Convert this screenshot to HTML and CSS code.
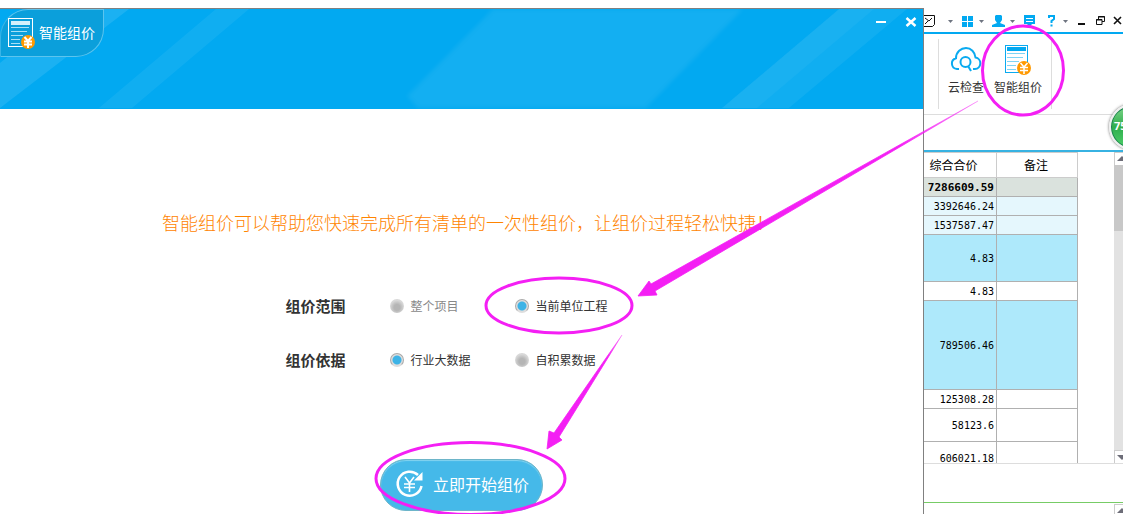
FILE: index.html
```html
<!DOCTYPE html>
<html lang="zh-CN">
<head>
    <meta charset="utf-8">
    <title>智能组价</title>
    <link rel="stylesheet" href="styles.css">
</head>
<body>
    <div class="screen">
        <!-- dialog -->
        <section class="dialog">
            <header class="dialog-header">
                <svg class="stripes" width="923" height="100" viewBox="0 0 923 100" aria-hidden="true">
                    <path d="M0 54 L66 0 H129 L0 99z" fill="#fff" fill-opacity=".1"/>
                    <path d="M216 0 H249 L132 99 H99z" fill="#fff" fill-opacity=".06"/>
                    <path class="soft" d="M493 0 H743 L646 99 H418 L407 87z" fill="#fff" fill-opacity=".07"/>
                    <path d="M839 0 H907 L789 99 H722z" fill="#fff" fill-opacity=".06"/>
                    <path d="M839 0 H874 L757 99 H722z" fill="#fff" fill-opacity=".04"/>
                </svg>
                <div class="dialog-tab">
                    <svg width="28" height="32" viewBox="0 0 28 32" aria-hidden="true">
                        <rect x=".5" y=".5" width="24" height="28" fill="#0b9fdb" stroke="#fff"/>
                        <rect x="3" y="3" width="19" height="4" fill="#d5f1fb"/>
                        <path d="M3 9.500h18M3 13.500h16M3 17.500h12M3 21.500h9M3 25.500h9" stroke="#a8e0f5" fill="none"/>
                        <circle cx="20" cy="24" r="7" fill="#f90"/>
                        <path d="M16.500 19l3.500 4 3.500-4M16 23.500h8M16 26.500h8M20 23v7" stroke="#fff" stroke-width="2" fill="none"/>
                    </svg>
                    <span>智能组价</span>
                </div>
                <div class="dialog-controls">
                    <button type="button" aria-label="最小化">
                        <svg width="12" height="12" viewBox="0 0 12 12"><path d="M1 6h10" stroke="#fff" stroke-width="2"/></svg>
                    </button>
                    <button type="button" aria-label="关闭">
                        <svg width="12" height="12" viewBox="0 0 12 12"><path d="M1.500 2l9 8M10.500 2l-9 8" stroke="#fff" stroke-width="2.500"/></svg>
                    </button>
                </div>
            </header>

            <div class="dialog-body">
                <p class="intro">智能组价可以帮助您快速完成所有清单的一次性组价，让组价过程轻松快捷！</p>

                <form class="options">
                    <div class="option-row" role="radiogroup" aria-labelledby="scope">
                        <strong id="scope">组价范围</strong>
                        <label class="muted"><input type="radio" name="scope">整个项目</label>
                        <label><input type="radio" name="scope" checked>当前单位工程</label>
                    </div>
                    <div class="option-row" role="radiogroup" aria-labelledby="basis">
                        <strong id="basis">组价依据</strong>
                        <label><input type="radio" name="basis" checked>行业大数据</label>
                        <label><input type="radio" name="basis">自积累数据</label>
                    </div>
                    <button type="button" class="start-button">
                        <svg width="30" height="30" viewBox="0 0 30 30" aria-hidden="true">
                            <path d="M23 6A12 12 0 1 0 26.500 17" fill="none" stroke="#fff" stroke-width="2.500"/>
                            <path d="M27.500 3v8.500h-8.500z" fill="#fff"/>
                            <path d="M10 8l4.500 6 4.500-6M9 15h11M9 18.500h11M14.500 14v9" fill="none" stroke="#fff" stroke-width="1.600"/>
                        </svg>
                        <span>立即开始组价</span>
                    </button>
                </form>
            </div>
        </section>

        <!-- main program behind the dialog -->
        <section class="app">
            <div class="title-bar">
                <button type="button" class="w35" aria-label="反馈">
                    <svg width="35" height="32" viewBox="0 0 35 32">
                        <path d="M0 15.500h10.500v9l-2 2H0M1 18l4 3 3-3M1 24l3-3" fill="none" stroke="#111"/>
                        <path d="M24 20h5l-2.500 3z" fill="#6e7480"/>
                    </svg>
                </button>
                <button type="button" class="w31" aria-label="窗口布局">
                    <svg width="31" height="32" viewBox="0 0 31 32">
                        <path d="M3 16h5v5H3zM9 16h5v5H9zM3 22h5v5H3zM9 22h5v5H9z" fill="#02a9f1"/>
                        <path d="M20 20h5l-2.500 3z" fill="#6e7480"/>
                    </svg>
                </button>
                <button type="button" class="w31" aria-label="用户">
                    <svg width="31" height="32" viewBox="0 0 31 32">
                        <path d="M6 15h5l1 1v4l-2 3 5 2v2H2v-2l5-2-2-3v-4z" fill="#02a9f1"/>
                        <path d="M20 20h5l-2.500 3z" fill="#6e7480"/>
                    </svg>
                </button>
                <button type="button" class="w22" aria-label="消息">
                    <svg width="22" height="32" viewBox="0 0 22 32">
                        <path d="M3 15h11v9h-3l-2.500 3L6 24H3z" fill="#02a9f1"/>
                        <path d="M5 18.500h7M5 21.500h7" stroke="#fff"/>
                    </svg>
                </button>
                <button type="button" class="w31" aria-label="帮助">
                    <svg width="31" height="32" viewBox="0 0 31 32">
                        <path d="M6 18v-2h5v3l-2.500 2v2M8.500 24.500v2" fill="none" stroke="#02a9f1" stroke-width="2"/>
                        <path d="M20 20h5l-2.500 3z" fill="#6e7480"/>
                    </svg>
                </button>
                <button type="button" class="w17" aria-label="最小化">
                    <svg width="17" height="32" viewBox="0 0 17 32"><path d="M4 24h7" stroke="#111" stroke-width="2"/></svg>
                </button>
                <button type="button" class="w18" aria-label="还原">
                    <svg width="18" height="32" viewBox="0 0 18 32">
                        <path d="M7.500 19v-2.500h6v5H11M7 17h7" fill="none" stroke="#111"/>
                        <path d="M5.500 19.500H11v5H5.500zM5 20h6" fill="#fff" stroke="#111"/>
                    </svg>
                </button>
                <button type="button" class="w14" aria-label="关闭">
                    <svg width="14" height="32" viewBox="0 0 14 32"><path d="M5 17l7 7M12 17l-7 7" stroke="#111" stroke-width="1.600"/></svg>
                </button>
            </div>

            <div class="ribbon">
                <div class="ribbon-group">
                    <button type="button" class="cloud-button">
                        <svg width="32" height="32" viewBox="0 0 32 32" aria-hidden="true">
                            <path d="M9 26H7a5.500 5.500 0 0 1-1-10.800C6 9 11 5 16 5s9 4 9.500 9.500A5.800 5.800 0 0 1 25 26h-2" fill="none" stroke="#0aaaf0" stroke-width="2"/>
                            <circle cx="15.500" cy="19" r="5" fill="none" stroke="#0aaaf0" stroke-width="2"/>
                            <path d="M18 23l3 5" stroke="#0aaaf0" stroke-width="2"/>
                        </svg>
                        <span>云检查</span>
                    </button>
                    <button type="button" class="price-button">
                        <svg width="28" height="32" viewBox="0 0 28 32" aria-hidden="true">
                            <rect x="1.500" y="2.500" width="22" height="27" fill="#fff" stroke="#0aaaf0"/>
                            <rect x="3" y="4" width="19" height="4" fill="#02a9f1"/>
                            <path d="M3 10.500h18M3 14.500h16M3 18.500h12M3 22.500h9M3 26.500h9" stroke="#7fd4f5" fill="none"/>
                            <circle cx="20" cy="25" r="7" fill="#f90"/>
                            <path d="M16.500 20l3.500 4 3.500-4M16 24.500h8M16 27.500h8M20 24v7" stroke="#fff" stroke-width="1.500" fill="none"/>
                        </svg>
                        <span>智能组价</span>
                    </button>
                </div>
            </div>
            <div class="tool-row"></div>

            <div class="grid-area">
                <table>
                    <thead>
                        <tr class="h26"><th>综合合价</th><th>备注</th></tr>
                    </thead>
                    <tbody>
                        <tr class="h19 total"><td><b>7286609.59</b></td><td></td></tr>
                        <tr class="h19 part"><td>3392646.24</td><td></td></tr>
                        <tr class="h19 part"><td>1537587.47</td><td></td></tr>
                        <tr class="h47 item"><td>4.83</td><td></td></tr>
                        <tr class="h19"><td>4.83</td><td></td></tr>
                        <tr class="h89 item"><td>789506.46</td><td></td></tr>
                        <tr class="h19"><td>125308.28</td><td></td></tr>
                        <tr class="h33"><td>58123.6</td><td></td></tr>
                        <tr class="h33"><td>606021.18</td><td></td></tr>
                    </tbody>
                </table>
                <div class="scrollbar">
                    <span class="arrow"><svg width="9" height="12" viewBox="0 0 9 12"><path d="M2 8h10L7 3z" fill="#6d6d78"/></svg></span>
                    <span class="thumb"></span>
                    <span class="arrow last"><svg width="9" height="12" viewBox="0 0 9 12"><path d="M2 4h10L7 9z" fill="#6d6d78"/></svg></span>
                </div>
            </div>
            <div class="status-row"></div>
            <div class="lower-pane">
                <span class="arrow"><svg width="9" height="12" viewBox="0 0 9 12"><path d="M2 8h10L7 3z" fill="#6d6d78"/></svg></span>
            </div>
            <div class="speed-ball">75</div>
        </section>

        <!-- pen marks over both windows -->
        <svg class="marks" width="1123" height="514" viewBox="0 0 1123 514" aria-hidden="true">
            <defs>
                <linearGradient id="fade-long" gradientUnits="userSpaceOnUse" x1="978" y1="101" x2="900" y2="146">
                    <stop offset="0" stop-color="#f41ff4" stop-opacity=".3"/>
                    <stop offset="1" stop-color="#f41ff4"/>
                </linearGradient>
                <linearGradient id="fade-short" gradientUnits="userSpaceOnUse" x1="622" y1="335" x2="608" y2="357">
                    <stop offset="0" stop-color="#f41ff4" stop-opacity=".3"/>
                    <stop offset="1" stop-color="#f41ff4"/>
                </linearGradient>
            </defs>
            <g fill="none" stroke="#f41ff4" stroke-width="3">
                <ellipse cx="1023" cy="70.500" rx="40.500" ry="44.500"/>
                <ellipse cx="559" cy="305.500" rx="73" ry="27.500"/>
                <ellipse cx="470.500" cy="478.500" rx="94.500" ry="36"/>
            </g>
            <path d="M638 296l11-15 2 3L978 101 655 291l2 4z" fill="url(#fade-long)" stroke="url(#fade-long)" stroke-width=".8"/>
            <path d="M547 449l2-18 5 2L622 335 559 437l3 3z" fill="url(#fade-short)" stroke="url(#fade-short)" stroke-width=".8"/>
        </svg>
    </div>
</body>
</html>
```
FILE: styles.css
```css
* {
    box-sizing: border-box;
}

body {
    margin: 0;
    background: #fff;
    color: #333;
    font-family: "Noto Sans CJK SC", sans-serif;
    font-size: 12px;
    line-height: 16px;
}

button {
    padding: 0;
    border: none;
    background: none;
    color: inherit;
    font: inherit;
    cursor: pointer;
}

svg {
    display: block;
    flex: none;
}

.screen {
    position: relative;
    display: grid;
    grid-template-columns: minmax(0, 1fr) 199px;
    height: 100vh;
    overflow: hidden;
}

/* dialog */
.dialog {
    margin-top: 8px;
    border-top: 1px solid #808080;
    border-right: 1px solid #808080;
}

.dialog-header {
    position: relative;
    display: flex;
    justify-content: space-between;
    align-items: flex-start;
    height: 100px;
    background: #02a9f1;
    overflow: hidden;
}

.stripes {
    position: absolute;
    top: 0;
    left: 0;
}

.soft {
    filter: blur(2px);
}

.dialog-tab {
    position: relative;
    display: flex;
    align-items: center;
    gap: 3px;
    width: 104px;
    height: 48px;
    padding: 2px 0 0 7px;
    border: 1px solid #5cc4ee;
    border-left-color: #39b4e6;
    border-radius: 28px 0 28px 0;
    background: #0b9fdb;
    color: #fff;
    font-size: 14px;
    line-height: 20px;
}

.dialog-tab span {
    padding-bottom: 4px;
}

.dialog-controls {
    position: relative;
    display: flex;
    gap: 18px;
    padding: 7px 6px 0 0;
}

.dialog-body {
    padding-top: 101px;
}

.intro {
    margin: 0 0 61px;
    padding-left: 13px;
    color: #ff8400;
    font-size: 18px;
    font-weight: 300;
    line-height: 24px;
    text-align: center;
    white-space: nowrap;
}

.options {
    display: flex;
    flex-direction: column;
    align-items: center;
}

.option-row {
    display: grid;
    grid-template-columns: 104px 125px 123px;
    align-items: center;
    height: 22px;
    margin-bottom: 32px;
}

.option-row strong {
    font-size: 15px;
    line-height: 22px;
}

.option-row label {
    display: flex;
    align-items: center;
    gap: 7px;
    white-space: nowrap;
}

.option-row .muted {
    color: #888;
}

.option-row input {
    appearance: none;
    width: 14px;
    height: 14px;
    margin: 0;
    border-radius: 50%;
    background: radial-gradient(circle at 50% 60%, #b5b5b5 3px, #d8d8d8 7px);
}

.option-row input:checked {
    border: 1px solid #aaa;
    border-bottom-color: #ddd;
    background: radial-gradient(circle, #3db3e6 4px, #ddd 5px);
}

.start-button {
    display: flex;
    align-items: center;
    gap: 8px;
    width: 163px;
    height: 52px;
    margin-top: 56px;
    padding: 0 0 2px 14px;
    border: 1px solid #6db5c9;
    border-radius: 26px;
    background: #45b9e9;
    box-shadow: inset 0 1px 1px #84d4f0;
    color: #fff;
    font-size: 16px;
    line-height: 24px;
    white-space: nowrap;
}

/* main program */
.app {
    position: relative;
    display: flex;
    flex-direction: column;
    overflow: hidden;
}

.title-bar,
.ribbon,
.tool-row,
.grid-area,
.status-row {
    flex: none;
}

.title-bar {
    display: flex;
    height: 34px;
    border-bottom: 2px solid #02a9f1;
}

.w35 { width: 35px; }
.w31 { width: 31px; }
.w22 { width: 22px; }
.w18 { width: 18px; }
.w17 { width: 17px; }
.w14 { width: 14px; }

.ribbon {
    height: 81px;
    padding: 5px 0 5px 14px;
    border-bottom: 1px solid #ddd;
}

.ribbon-group {
    display: flex;
    width: 114px;
    height: 70px;
    border-left: 1px solid #ddd;
    border-right: 1px solid #ddd;
}

.ribbon-group button {
    display: flex;
    flex-direction: column;
    align-items: center;
    gap: 4px;
    padding-top: 4px;
    white-space: nowrap;
}

.cloud-button {
    width: 54px;
}

.price-button {
    width: 50px;
}

.tool-row {
    height: 37px;
    border-bottom: 2px solid #37b2e2;
}

.grid-area {
    display: flex;
    justify-content: space-between;
    height: 312px;
    border-bottom: 1px solid #ddd;
    overflow: hidden;
}

table {
    width: 154px;
    height: 323px;
    border-collapse: separate;
    border-spacing: 0;
    table-layout: fixed;
    color: #000;
}

th,
td {
    padding: 0 2px 0 0;
    border-right: 1px solid #b0b0b0;
    border-bottom: 1px solid #b0b0b0;
    line-height: 12px;
}

th {
    border-top: 1px solid #ccc;
    border-color: #ccc;
    font-weight: 400;
}

th:first-child {
    width: 73px;
    padding-right: 13px;
    white-space: nowrap;
}

td {
    padding-top: 2px;
    font-family: "DejaVu Sans Mono", monospace;
    font-size: 10px;
    text-align: right;
}

td b {
    font-size: 11px;
}

.h19 { height: 19px; }
.h26 { height: 26px; }
.h33 { height: 33px; }
.h47 { height: 47px; }
.h89 { height: 89px; }

.total { background: #dae2dd; }
.part { background: #e5f7fd; }
.item { background: #aee9fb; }

.scrollbar {
    display: flex;
    flex-direction: column;
    width: 9px;
    background: #e2e2e2;
}

.arrow {
    flex: none;
    width: 9px;
    height: 13px;
    border-top: 1px solid #ccc;
    border-left: 1px solid #ccc;
    background: #fff;
    overflow: hidden;
}

.thumb {
    height: 66px;
    background: #c8c8c8;
}

.last {
    margin-top: auto;
}

.status-row {
    height: 39px;
    border-bottom: 1px solid #77cc66;
}

.lower-pane {
    display: flex;
    flex: 1;
    justify-content: flex-end;
    padding-top: 1px;
}

/* floating ball, half off the right edge */
.speed-ball {
    position: absolute;
    top: 104px;
    right: -32px;
    width: 46px;
    height: 46px;
    padding: 12px 0 0 3px;
    border: 2px solid #eee;
    border-radius: 50%;
    background: linear-gradient(#7fd58a, #2fae4d 50%, #4fd06a);
    box-shadow: 0 0 3px #666, inset 0 0 0 1px #1b8150;
    color: #fff;
    font: bold 11px/16px "Open Sans", sans-serif;
}

.marks {
    position: absolute;
    top: 0;
    left: 0;
    pointer-events: none;
}
```
